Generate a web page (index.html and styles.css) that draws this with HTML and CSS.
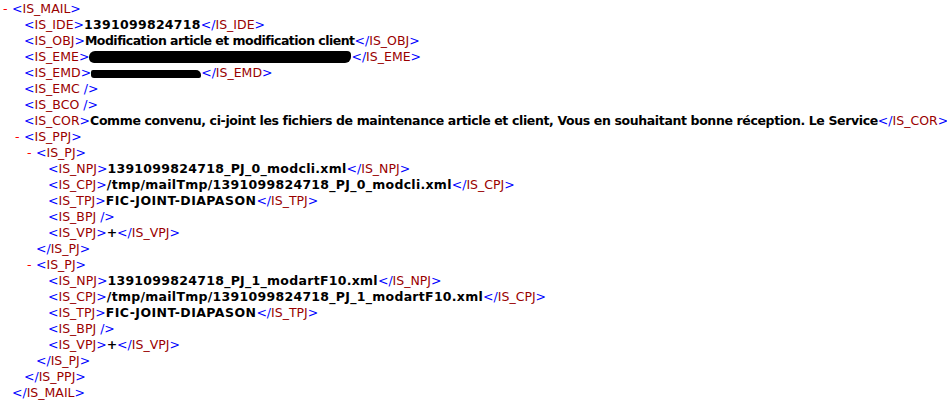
FILE: index.html
```html
<!DOCTYPE html>
<html>
<head>
<meta charset="utf-8">
<link rel="stylesheet" href="styles.css">
</head>
<body>
<div class="doc">
  <div class="node">
    <div class="line"><span class="gut">-</span><span class="m">&lt;</span><span class="t">IS_MAIL</span><span class="m">&gt;</span></div>
    <div class="kids">
      <div class="line"><span class="gut"></span><span class="m">&lt;</span><span class="t">IS_IDE</span><span class="m">&gt;</span><span class="tx tx-num">1391099824718</span><span class="m">&lt;/</span><span class="t">IS_IDE</span><span class="m">&gt;</span></div>
      <div class="line"><span class="gut"></span><span class="m">&lt;</span><span class="t">IS_OBJ</span><span class="m">&gt;</span><span class="tx tx-obj">Modification article et modification client</span><span class="m">&lt;/</span><span class="t">IS_OBJ</span><span class="m">&gt;</span></div>
      <div class="line"><span class="gut"></span><span class="m">&lt;</span><span class="t">IS_EME</span><span class="m">&gt;</span><span class="redact redact-eme"></span><span class="m">&lt;/</span><span class="t">IS_EME</span><span class="m">&gt;</span></div>
      <div class="line"><span class="gut"></span><span class="m">&lt;</span><span class="t">IS_EMD</span><span class="m">&gt;</span><span class="redact redact-emd"></span><span class="m">&lt;/</span><span class="t">IS_EMD</span><span class="m">&gt;</span></div>
      <div class="line"><span class="gut"></span><span class="m">&lt;</span><span class="t">IS_EMC</span><span class="m">&nbsp;/&gt;</span></div>
      <div class="line"><span class="gut"></span><span class="m">&lt;</span><span class="t">IS_BCO</span><span class="m">&nbsp;/&gt;</span></div>
      <div class="line"><span class="gut"></span><span class="m">&lt;</span><span class="t">IS_COR</span><span class="m">&gt;</span><span class="tx tx-cor">Comme convenu, ci-joint les fichiers de maintenance article et client, Vous en souhaitant bonne réception. Le Service</span><span class="m">&lt;/</span><span class="t">IS_COR</span><span class="m">&gt;</span></div>
      <div class="node">
        <div class="line"><span class="gut">-</span><span class="m">&lt;</span><span class="t">IS_PPJ</span><span class="m">&gt;</span></div>
        <div class="kids">
          <div class="node">
            <div class="line"><span class="gut">-</span><span class="m">&lt;</span><span class="t">IS_PJ</span><span class="m">&gt;</span></div>
            <div class="kids">
              <div class="line"><span class="gut"></span><span class="m">&lt;</span><span class="t">IS_NPJ</span><span class="m">&gt;</span><span class="tx tx-num">1391099824718_PJ_0_modcli.xml</span><span class="m">&lt;/</span><span class="t">IS_NPJ</span><span class="m">&gt;</span></div>
              <div class="line"><span class="gut"></span><span class="m">&lt;</span><span class="t">IS_CPJ</span><span class="m">&gt;</span><span class="tx tx-num">/tmp/mailTmp/1391099824718_PJ_0_modcli.xml</span><span class="m">&lt;/</span><span class="t">IS_CPJ</span><span class="m">&gt;</span></div>
              <div class="line"><span class="gut"></span><span class="m">&lt;</span><span class="t">IS_TPJ</span><span class="m">&gt;</span><span class="tx tx-caps">FIC-JOINT-DIAPASON</span><span class="m">&lt;/</span><span class="t">IS_TPJ</span><span class="m">&gt;</span></div>
              <div class="line"><span class="gut"></span><span class="m">&lt;</span><span class="t">IS_BPJ</span><span class="m">&nbsp;/&gt;</span></div>
              <div class="line"><span class="gut"></span><span class="m">&lt;</span><span class="t">IS_VPJ</span><span class="m">&gt;</span><span class="tx">+</span><span class="m">&lt;/</span><span class="t">IS_VPJ</span><span class="m">&gt;</span></div>
            </div>
            <div class="line"><span class="gut"></span><span class="m">&lt;/</span><span class="t">IS_PJ</span><span class="m">&gt;</span></div>
          </div>
          <div class="node">
            <div class="line"><span class="gut">-</span><span class="m">&lt;</span><span class="t">IS_PJ</span><span class="m">&gt;</span></div>
            <div class="kids">
              <div class="line"><span class="gut"></span><span class="m">&lt;</span><span class="t">IS_NPJ</span><span class="m">&gt;</span><span class="tx tx-num">1391099824718_PJ_1_modartF10.xml</span><span class="m">&lt;/</span><span class="t">IS_NPJ</span><span class="m">&gt;</span></div>
              <div class="line"><span class="gut"></span><span class="m">&lt;</span><span class="t">IS_CPJ</span><span class="m">&gt;</span><span class="tx tx-num">/tmp/mailTmp/1391099824718_PJ_1_modartF10.xml</span><span class="m">&lt;/</span><span class="t">IS_CPJ</span><span class="m">&gt;</span></div>
              <div class="line"><span class="gut"></span><span class="m">&lt;</span><span class="t">IS_TPJ</span><span class="m">&gt;</span><span class="tx tx-caps">FIC-JOINT-DIAPASON</span><span class="m">&lt;/</span><span class="t">IS_TPJ</span><span class="m">&gt;</span></div>
              <div class="line"><span class="gut"></span><span class="m">&lt;</span><span class="t">IS_BPJ</span><span class="m">&nbsp;/&gt;</span></div>
              <div class="line"><span class="gut"></span><span class="m">&lt;</span><span class="t">IS_VPJ</span><span class="m">&gt;</span><span class="tx">+</span><span class="m">&lt;/</span><span class="t">IS_VPJ</span><span class="m">&gt;</span></div>
            </div>
            <div class="line"><span class="gut"></span><span class="m">&lt;/</span><span class="t">IS_PJ</span><span class="m">&gt;</span></div>
          </div>
        </div>
        <div class="line"><span class="gut"></span><span class="m">&lt;/</span><span class="t">IS_PPJ</span><span class="m">&gt;</span></div>
      </div>
    </div>
    <div class="line"><span class="gut"></span><span class="m">&lt;/</span><span class="t">IS_MAIL</span><span class="m">&gt;</span></div>
  </div>
</div>
</body>
</html>
```
FILE: styles.css
```css
html, body {
  margin: 0;
  padding: 0;
  background: #ffffff;
}
.doc {
  font-family: "DejaVu Sans", sans-serif;
  font-size: 12.5px;
  line-height: 16px;
  color: #000000;
  padding-top: 1px;
}
.line {
  display: flex;
  align-items: center;
  height: 16px;
  white-space: nowrap;
}
.gut {
  flex: 0 0 12px;
  width: 12px;
  padding-left: 3px;
  box-sizing: border-box;
  color: #ff0000;
}
.kids {
  padding-left: 12px;
}
.m {
  color: #0000ff;
}
.t {
  color: #990000;
}
.tx {
  font-weight: bold;
  color: #000000;
}
.tx-num {
  letter-spacing: 0.28px;
}
.tx-caps {
  letter-spacing: 0.45px;
}
.tx-obj {
  letter-spacing: -0.52px;
}
.tx-cor {
  letter-spacing: -0.37px;
}
.redact {
  display: inline-block;
  background: #000000;
}
.redact-eme {
  width: 262px;
  height: 12px;
  border-radius: 6px 4px 6px 5px;
}
.redact-emd {
  width: 110px;
  height: 8px;
  margin-top: 2px;
  border-radius: 2px 5px 2px 3px;
}
```
